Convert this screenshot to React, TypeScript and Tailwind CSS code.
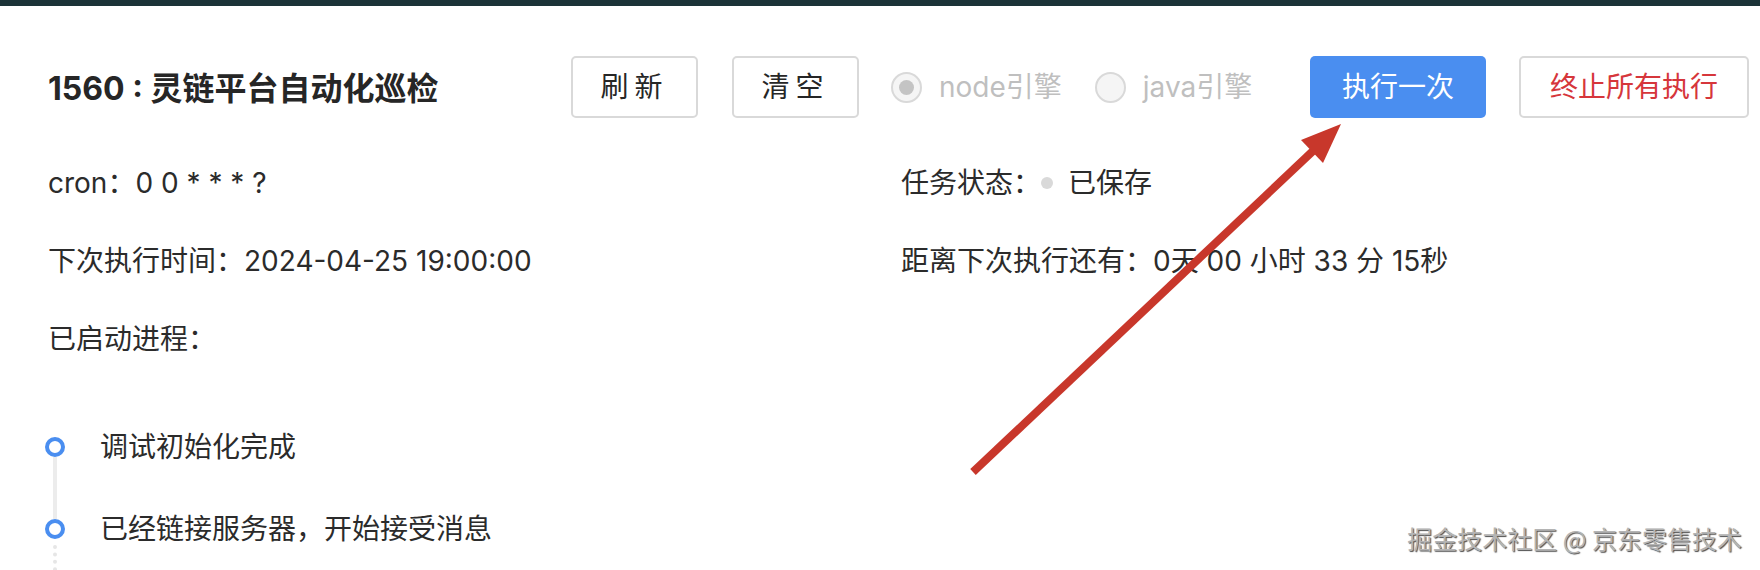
import React from "react";

const font = "font-['Inter','Noto_Sans_CJK_SC',sans-serif]";

const Radio = ({ label, checked }: { label: string; checked?: boolean }) => (
  <label className="flex items-center text-[28px] text-[#bfbfbf]">
    <span className="w-[31px] h-[31px] rounded-full border-2 border-[#d9d9d9] bg-[#f5f5f5] flex items-center justify-center">
      {checked && <span className="w-[15px] h-[15px] rounded-full bg-[#c4c4c4]" />}
    </span>
    <span className="ml-[17px]">{label}</span>
  </label>
);

const Arrow = () => (
  <svg
    className="absolute left-0 top-0 w-[1760px] h-[570px] pointer-events-none"
    viewBox="0 0 1760 570"
  >
    <line x1="973" y1="472" x2="1314" y2="150" stroke="#c8372b" strokeWidth="8" />
    <polygon points="1341,124 1301,140 1323,163" fill="#c8372b" />
  </svg>
);

const Timeline = () => {
  const items = ["调试初始化完成", "已经链接服务器，开始接受消息"];
  return (
    <div className="-ml-[3px] mt-[59px]">
      {items.map((t, i) => (
        <div key={t} className="flex items-stretch h-[82px]">
          <div className="w-[20px] flex flex-col items-center">
            <span className="w-[20px] h-[20px] rounded-full border-4 border-[#4a8ef0] bg-white shrink-0" />
            {i === 0 ? (
              <span className="flex-1 w-[4px] bg-[#ececec]" />
            ) : (
              <span className="flex-1 w-0 border-l-4 border-dotted border-[#e6e6e6] mt-[6px]" />
            )}
          </div>
          <div className="ml-[35px] text-[28px] leading-[20px] text-[#2b2b2b]">{t}</div>
        </div>
      ))}
    </div>
  );
};

export default function App() {
  return (
    <div className={`relative h-[570px] w-full overflow-hidden bg-white ${font}`}>
      <div className="h-[6px] bg-[#1c3338]" />
      <div className="pl-[48px] pr-[11px]">
        {/* header */}
        <div className="mt-[50px] h-[62px] flex items-center">
          <h1 className="w-[523px] pt-[4px] text-[32px] font-bold text-[#262626]">1560 : 灵链平台自动化巡检</h1>
          <button className="h-[62px] w-[127px] border-2 border-[#d9d9d9] rounded-[5px] text-[28px] text-[#262626] tracking-[6px]">
            刷新
          </button>
          <button className="ml-[34px] h-[62px] w-[127px] border-2 border-[#d9d9d9] rounded-[5px] text-[28px] text-[#262626] tracking-[6px]">
            清空
          </button>
          <div className="ml-[32px] flex items-center gap-[33px]">
            <Radio label="node引擎" checked />
            <Radio label="java引擎" />
          </div>
          <button className="ml-auto h-[62px] w-[176px] rounded-[5px] bg-[#4a8ef0] text-[28px] text-white">
            执行一次
          </button>
          <button className="ml-[33px] h-[62px] w-[230px] border-2 border-[#d9d9d9] rounded-[5px] text-[28px] text-[#d6363b]">
            终止所有执行
          </button>
        </div>

        {/* info */}
        <div className="mt-[26px] grid grid-cols-[853px_1fr] text-[28px] text-[#2b2b2b]">
          <div className="h-[78px] flex items-center">cron：0 0 * * * ?</div>
          <div className="h-[78px] flex items-center">
            任务状态：
            <span className="w-[12px] h-[12px] rounded-full bg-[#d9d9d9]" />
            <span className="ml-[15px]">已保存</span>
          </div>
          <div className="h-[78px] flex items-center">下次执行时间：2024-04-25 19:00:00</div>
          <div className="h-[78px] flex items-center">距离下次执行还有：0天 00 小时 33 分 15秒</div>
          <div className="h-[78px] flex items-center">已启动进程：</div>
        </div>

        <Timeline />
      </div>

      <Arrow />

      <div className="absolute right-[18px] top-[523px] text-[25px] leading-[30px] text-[#b4b4b4] [text-shadow:1px_1px_1px_rgba(0,0,0,0.7)] font-['Noto_Sans_CJK_SC',sans-serif]">
        掘金技术社区 @ 京东零售技术
      </div>
    </div>
  );
}
